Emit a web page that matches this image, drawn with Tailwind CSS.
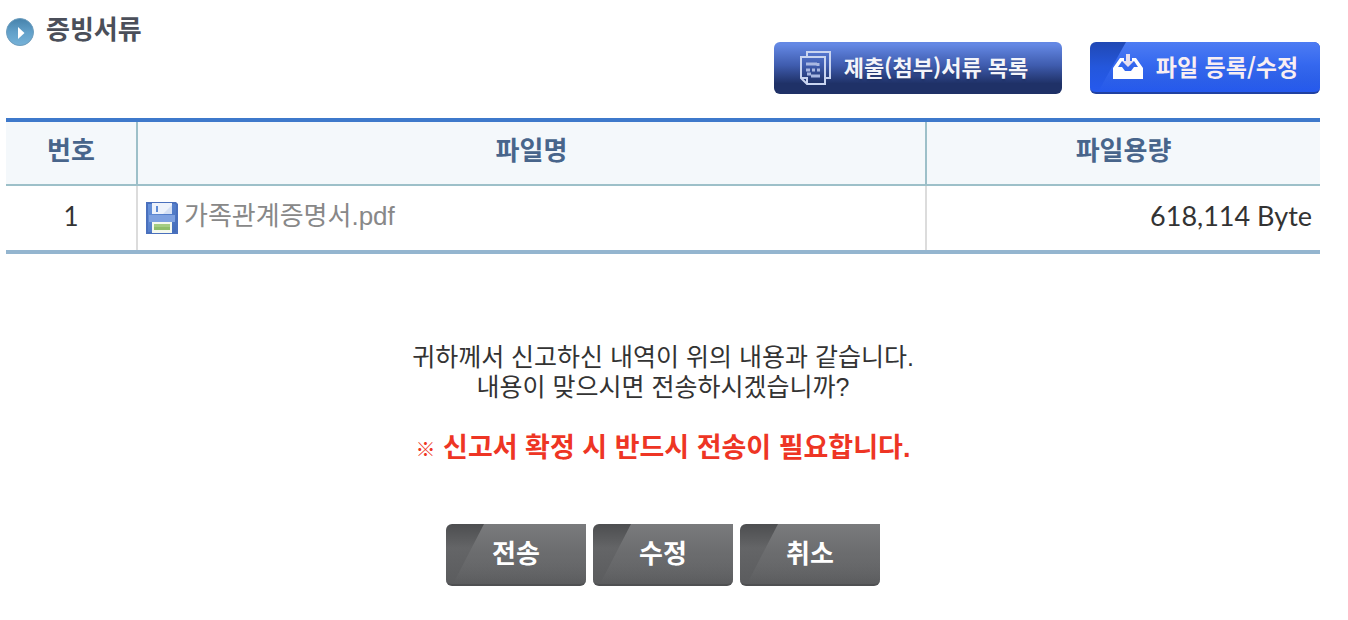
<!DOCTYPE html>
<html lang="ko">
<head>
    <meta charset="UTF-8">
    <meta name="viewport" content="width=device-width, initial-scale=1.0">
    <title>증빙서류</title>
    <script src="https://cdn.jsdelivr.net/npm/@tailwindcss/browser@4"></script>
</head>
<body class="bg-white pl-[6px] pr-7 pt-4 pb-8 text-[#333333] font-['Liberation_Sans','Noto_Sans_CJK_KR',sans-serif]">

    <!-- 제목, 상단 버튼 -->
    <header class="flex items-start justify-between mb-6">
        <div class="flex items-start gap-3">
            <svg class="w-7 h-7 mt-[2px]" viewBox="0 0 28 28">
                <defs>
                    <linearGradient id="ball" x1="0" y1="0" x2="0" y2="1">
                        <stop offset="0" stop-color="#4682ab"/>
                        <stop offset="0.5" stop-color="#62a0c9"/>
                        <stop offset="1" stop-color="#76b2d8"/>
                    </linearGradient>
                </defs>
                <circle cx="14" cy="14.5" r="13.5" fill="#b9cbd8"/>
                <circle cx="14" cy="14" r="13.5" fill="url(#ball)" stroke="#6f9fbf"/>
                <path d="M12 9L18.5 15L12 21Z" fill="#fff"/>
            </svg>
            <h1 class="text-[26px] leading-7 font-bold text-[#4b4f5a]">증빙서류</h1>
        </div>
        <div class="flex gap-7 mt-[26px] font-['Noto_Sans_CJK_KR',sans-serif]">
            <button type="button" class="flex items-center justify-center gap-3 w-72 h-[52px] pr-2 rounded-md bg-linear-to-b from-[#6488e4] from-5% via-[#3f5cae] via-45% to-[#1f3167] to-80% text-[#f4f5fa] text-[22px] leading-7 font-bold text-shadow-sm">
                <svg class="w-8 h-9" viewBox="0 0 32 36" fill="none" stroke="#c9d4f0" stroke-width="2">
                    <path d="M7 6V2H30V28H26"/>
                    <path d="M1 7H25V34H7L1 28Z"/>
                    <path d="M1 28H7V34"/>
                    <path d="M6 14H17M18 13V16M6 20H10M12 20H15M17 20H20M7 24H11M11 26H20" stroke="#a9b8e2" stroke-width="3"/>
                </svg>
                <span class="pb-1">제출(첨부)서류 목록</span>
            </button>
            <button type="button" class="relative flex items-center justify-center gap-3 w-[230px] h-[52px] rounded-md overflow-hidden bg-linear-to-b from-[#2048b4] via-[#2457dc] via-50% to-[#2559ee] border-b-2 border-[#2141a0] text-[#f8eef2] text-[23px] leading-7 font-bold">
                <span class="absolute inset-0 bg-linear-to-b from-[#4d7cf3] via-[#3568ef] via-45% to-[#2559ee]/0 [clip-path:polygon(36px_0,100%_0,100%_100%,8px_100%)]"></span>
                <svg class="relative w-8 h-7" viewBox="0 0 32 28">
                    <path d="M1 15L8 5H12V8H10L6 14H10L13 18H19L22 14H26L22 8H20V5H24L31 15V26H1Z" fill="#fff"/>
                    <path d="M14 1H18V8H22L16 14L10 8H14Z" fill="#e6dff0"/>
                </svg>
                <span class="relative pb-[2px]">파일 등록/수정</span>
            </button>
        </div>
    </header>

    <!-- 첨부파일 목록 -->
    <table class="w-full table-fixed border-separate border-spacing-0 border-t-4 border-b-4 border-t-[#3e79cb] border-b-[#94b5cf] text-[26px] leading-9">
        <thead>
            <tr class="bg-[#f4f8fb] text-[#48658b]">
                <th scope="col" class="w-[132px] h-16 p-0 pb-1 border-r-2 border-b-2 border-[#9dc0c9] font-bold">번호</th>
                <th scope="col" class="h-16 p-0 pb-1 border-r-2 border-b-2 border-[#9dc0c9] font-bold">파일명</th>
                <th scope="col" class="w-[393px] h-16 p-0 pb-1 border-b-2 border-[#9dc0c9] font-bold">파일용량</th>
            </tr>
        </thead>
        <tbody>
            <tr>
                <td class="h-16 p-0 pb-1 border-r-2 border-[#dcdcdc] text-center font-['Lato','Noto_Sans_CJK_KR',sans-serif]">1</td>
                <td class="h-16 p-0 pl-2 border-r-2 border-[#dcdcdc]">
                    <a href="#" class="flex items-center gap-[6px] text-[#888888]">
                        <svg class="w-8 h-8" viewBox="0 0 32 32">
                            <defs>
                                <linearGradient id="disk" x1="0" y1="0" x2="1" y2="1">
                                    <stop offset="0" stop-color="#6793dc"/>
                                    <stop offset="1" stop-color="#436bb9"/>
                                </linearGradient>
                            </defs>
                            <path d="M0 0H30L32 2V32H0Z" fill="#4a70bd"/>
                            <path d="M2 2H29L30 3V30H2Z" fill="url(#disk)"/>
                            <rect x="3" y="13" width="26" height="7" fill="#7ea1e0"/>
                            <rect x="6" y="1" width="20" height="11" fill="#edf2fb"/>
                            <path d="M17 12L26 3V12Z" fill="#d5e0f4"/>
                            <rect x="10" y="4" width="2" height="6" fill="#5e8bd5"/>
                            <rect x="6" y="20" width="20" height="11" fill="#f5f9ee"/>
                            <rect x="8" y="22" width="16" height="3" fill="#a5cd82"/>
                            <rect x="8" y="25" width="16" height="3" fill="#8fbe69"/>
                        </svg>
                        <span class="pb-1">가족관계증명서.pdf</span>
                    </a>
                </td>
                <td class="h-16 p-0 pr-2 pb-1 text-right text-[27px] font-['Lato','Noto_Sans_CJK_KR',sans-serif]">618,114 Byte</td>
            </tr>
        </tbody>
    </table>

    <!-- 안내 문구 -->
    <div class="mt-[88px] text-center text-[25px] leading-[30px]">
        <p>귀하께서 신고하신 내역이 위의 내용과 같습니다.<br>내용이 맞으시면 전송하시겠습니까?</p>
        <p class="mt-[31px] text-[27px] font-bold text-[#ee3524]"><span class="text-[20px]">※</span> 신고서 확정 시 반드시 전송이 필요합니다.</p>
    </div>

    <!-- 하단 버튼 -->
    <div class="flex justify-center gap-[7px] mt-[59px] text-white text-[26px] leading-8 font-bold">
        <button type="submit" class="relative w-[140px] h-[62px] rounded-md rounded-tr-none overflow-hidden bg-linear-to-b from-[#4d4e50] via-[#646567] via-40% to-[#5b5c5e] border-b-2 border-[#4f5052]">
            <span class="absolute inset-0 bg-linear-to-b from-[#7a7b7d] via-[#6b6c6e] via-50% to-[#5b5c5e]/0 [clip-path:polygon(38px_0,100%_0,100%_100%,7px_100%)]"></span>
            <span class="relative">전송</span>
        </button>
        <button type="button" class="relative w-[140px] h-[62px] rounded-md rounded-tr-none overflow-hidden bg-linear-to-b from-[#4d4e50] via-[#646567] via-40% to-[#5b5c5e] border-b-2 border-[#4f5052]">
            <span class="absolute inset-0 bg-linear-to-b from-[#7a7b7d] via-[#6b6c6e] via-50% to-[#5b5c5e]/0 [clip-path:polygon(38px_0,100%_0,100%_100%,7px_100%)]"></span>
            <span class="relative">수정</span>
        </button>
        <button type="button" class="relative w-[140px] h-[62px] rounded-md rounded-tr-none overflow-hidden bg-linear-to-b from-[#4d4e50] via-[#646567] via-40% to-[#5b5c5e] border-b-2 border-[#4f5052]">
            <span class="absolute inset-0 bg-linear-to-b from-[#7a7b7d] via-[#6b6c6e] via-50% to-[#5b5c5e]/0 [clip-path:polygon(38px_0,100%_0,100%_100%,7px_100%)]"></span>
            <span class="relative">취소</span>
        </button>
    </div>

</body>
</html>
